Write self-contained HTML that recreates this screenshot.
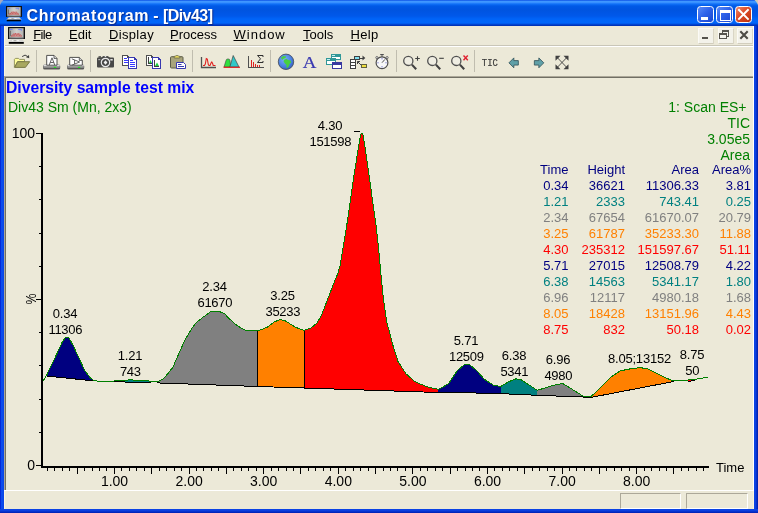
<!DOCTYPE html>
<html><head><meta charset="utf-8">
<style>
html,body{margin:0;padding:0;}
html{background:#ece9d8;}
#w{position:absolute;left:0;top:0;width:758px;height:513px;will-change:transform;}
body{width:758px;height:513px;overflow:hidden;background:#ece9d8;font-family:"Liberation Sans",sans-serif;position:relative;}
.abs{position:absolute;}
#title{left:0;top:0;width:758px;height:26px;clip-path:polygon(0 5px,1px 3px,2px 1.5px,3.5px 0,754.5px 0,756px 1.5px,757px 3px,758px 5px,758px 26px,0 26px);
background:linear-gradient(to bottom,#0a48e0 0px,#2f86fc 1px,#3f97ff 1.5px,#3890ff 2.5px,#1070f8 4px,#0059e6 6px,#0054e0 10px,#0058ea 16px,#0064f8 19px,#0066fa 23px,#0050e0 24px,#0036c0 25px,#0030b0 26px);}
#ttext{left:26.5px;top:5.5px;color:#fff;font-weight:bold;font-size:16px;line-height:20px;white-space:nowrap;text-shadow:1px 1px 1px #0a2a8a;letter-spacing:0.2px;word-spacing:-0.5px}
.bl{left:0;top:26px;width:4px;height:487px;background:linear-gradient(to right,#0019cf 0%,#0d4ff0 40%,#0a44e4 100%);}
.br{left:754px;top:26px;width:4px;height:487px;background:linear-gradient(to right,#0b45e6 0%,#0a3fe0 40%,#001ba8 100%);}
.bb{left:0;top:509px;width:758px;height:4px;background:linear-gradient(to bottom,#0b45e6,#0a3fe0 40%,#001fb0 100%);}
.menu{top:27px;font-size:13px;line-height:16px;color:#000;white-space:nowrap;}
.menu u{text-decoration:underline;}
.sep{width:1px;height:22px;top:50px;background:#c0bdaf;}
.t13{font-size:13px;line-height:16px;white-space:nowrap;}
.t14{font-size:14px;line-height:16px;white-space:nowrap;}
.r{text-align:right;}
.c{text-align:center;}
.cb{top:6px;width:14.500px;height:15px;border:1px solid #fff;border-radius:3.5px;}
.mb{top:27.5px;width:14px;height:14px;background:#f3f2ea;border:1px solid;border-color:#fbfaf6 #d9d5c5 #d2cebd #fbfaf6;border-radius:1px}
</style></head><body><div id="w">
<div class="abs" style="left:0;top:0;width:6px;height:6px;background:#a5a9c0"></div><div class="abs" style="left:752px;top:0;width:6px;height:6px;background:#cfcbb8"></div><div id="title" class="abs"></div>
<div id="ttext" class="abs"><span style="letter-spacing:0.66px">Chromatogram</span><span> - </span><span style="letter-spacing:-0.55px">[Div43]</span></div>
<div class="abs bl"></div><div class="abs br"></div><div class="abs bb"></div>
<!-- menu -->
<div class="abs menu" style="left:33.300px;letter-spacing:-0.650px"><u>F</u>ile</div>
<div class="abs menu" style="left:69px"><u>E</u>dit</div>
<div class="abs menu" style="left:109px;letter-spacing:0.34px"><u>D</u>isplay</div>
<div class="abs menu" style="left:170px"><u>P</u>rocess</div>
<div class="abs menu" style="left:233.5px;letter-spacing:1px"><u>W</u>indow</div>
<div class="abs menu" style="left:303px"><u>T</u>ools</div>
<div class="abs menu" style="left:350.4px;letter-spacing:0.4px"><u>H</u>elp</div>
<!-- toolbar seps -->
<div class="abs sep" style="left:36px"></div>
<div class="abs sep" style="left:90px"></div>
<div class="abs sep" style="left:192px"></div>
<div class="abs sep" style="left:270px"></div>
<div class="abs sep" style="left:396px"></div>
<div class="abs sep" style="left:474px"></div>
<!-- lines -->
<div class="abs" style="left:4px;top:45px;width:750px;height:1px;background:#c9c6b8"></div>
<div class="abs" style="left:4px;top:46px;width:750px;height:1px;background:#fff"></div>
<div class="abs" style="left:4px;top:26px;width:1px;height:50px;background:#fbf5df"></div>
<div class="abs" style="left:753px;top:26px;width:1px;height:50px;background:#fff"></div>
<div class="abs" style="left:4px;top:76px;width:750px;height:1px;background:#aca899"></div>
<div class="abs" style="left:5px;top:77px;width:748px;height:1px;background:#716f64"></div>
<div class="abs" style="left:4px;top:76px;width:1px;height:414px;background:#aca899"></div>
<div class="abs" style="left:5px;top:77px;width:1px;height:413px;background:#716f64"></div>
<div class="abs" style="left:4px;top:490px;width:750px;height:1px;background:#fff"></div><div class="abs" style="left:753px;top:76px;width:1px;height:415px;background:#fff"></div>
<div class="abs" style="left:4px;top:491px;width:1px;height:18px;background:#fbf5df"></div>
<div class="abs" style="left:753px;top:491px;width:1px;height:18px;background:#fbf5df"></div>
<!-- status panels -->
<div class="abs" style="left:620px;top:493px;width:61px;height:16px;border:1px solid #aca899;border-right-color:#fff;border-bottom-color:#fff;box-sizing:border-box"></div>
<div class="abs" style="left:686px;top:493px;width:62px;height:16px;border:1px solid #aca899;border-right-color:#fff;border-bottom-color:#fff;box-sizing:border-box"></div>
<!-- chart text -->
<div class="abs" style="left:6px;top:78.600px;font-size:15.700px;line-height:18px;font-weight:bold;color:#0000ff;white-space:nowrap">Diversity sample test mix</div>
<div class="abs t14" style="left:8px;top:99px;color:#008000">Div43 Sm (Mn, 2x3)</div>
<svg class="abs" style="left:0;top:0" width="758" height="513" viewBox="0 0 758 513" id="chart">
<g shape-rendering="crispEdges">
<polygon points="46.6,375.3 54.7,358.4 62.2,342.2 65.3,337.4 67.0,337.0 68.7,337.4 73.4,346.0 79.7,359.7 84.7,370.3 89.7,377.2 92.8,379.9 92.8,380.3 46.6,375.5" fill="#000080" stroke="none"/>
<polygon points="109.9,381.3 116.0,380.9 122.7,380.7 127.0,380.2 130.4,379.4 133.5,380.1 137.0,380.6 148.5,380.8 151.4,381.5 151.4,381.7 109.9,381.4" fill="#008080" stroke="none"/>
<polygon points="156.7,381.7 160.0,380.6 164.0,378.3 172.8,367.5 178.1,355.3 185.1,339.5 192.1,328.1 196.0,322.8 202.6,317.5 210.5,311.9 220.2,311.9 224.6,313.7 228.9,318.4 236.0,324.6 241.2,328.1 245.6,330.2 253.0,330.7 257.6,331.0 257.6,386.0 156.7,382.4" fill="#808080" stroke="none"/>
<polygon points="257.6,331.0 267.0,327.4 274.0,322.0 280.5,319.5 285.6,321.0 295.0,327.0 304.0,330.5 304.0,387.5 257.6,386.0" fill="#ff8000" stroke="none"/>
<polygon points="304.0,330.5 311.0,328.0 316.9,323.2 321.6,315.0 327.4,299.8 333.3,284.6 338.0,273.0 340.3,264.8 343.3,246.0 346.8,225.0 350.5,200.0 354.3,173.5 358.0,150.0 360.5,135.0 361.8,133.0 363.0,135.0 365.5,150.0 368.8,173.5 372.5,200.0 376.0,225.0 378.4,246.0 380.7,271.8 383.5,299.8 387.0,323.2 389.0,330.0 392.4,343.5 398.0,361.4 405.9,373.7 414.9,381.6 426.0,386.5 438.4,389.4 438.4,392.0 304.0,387.5" fill="#ff0000" stroke="none"/>
<polygon points="438.4,389.4 448.5,383.8 457.5,370.4 464.2,364.8 469.8,364.8 476.5,370.4 484.4,379.3 493.3,385.0 500.7,386.5 500.7,393.1 438.4,391.6" fill="#000080" stroke="none"/>
<polygon points="500.7,386.5 509.0,381.6 515.8,378.9 520.3,379.3 529.2,385.0 537.3,390.3 537.3,394.8 500.7,393.1" fill="#008080" stroke="none"/>
<polygon points="537.3,390.3 551.4,385.9 562.4,383.4 570.2,388.0 582.8,396.0 590.6,397.0 590.6,396.8 537.3,394.8" fill="#808080" stroke="none"/>
<polygon points="590.6,397.0 601.6,386.5 611.0,377.0 620.5,370.8 633.0,368.3 640.9,367.7 648.7,369.2 658.0,374.0 667.6,378.7 673.8,380.9 673.8,381.0 590.6,397.0" fill="#ff8000" stroke="none"/>
<polygon points="691.0,379.4 695.0,379.4 695.5,380.0 687.5,380.9" fill="#ff0000" stroke="none"/>
<line x1="46.6" y1="376.0" x2="92.8" y2="380.8" stroke="#000" stroke-width="1"/>
<line x1="109.9" y1="381.9" x2="151.4" y2="382.2" stroke="#000" stroke-width="1"/>
<line x1="156.7" y1="382.9" x2="257.6" y2="386.5" stroke="#000" stroke-width="1"/>
<line x1="257.6" y1="386.5" x2="304.0" y2="388.0" stroke="#000" stroke-width="1"/>
<line x1="304.0" y1="388.0" x2="438.4" y2="392.5" stroke="#000" stroke-width="1"/>
<line x1="438.4" y1="392.1" x2="500.7" y2="393.6" stroke="#000" stroke-width="1"/>
<line x1="500.7" y1="393.6" x2="537.3" y2="395.3" stroke="#000" stroke-width="1"/>
<line x1="537.3" y1="395.3" x2="590.6" y2="397.3" stroke="#000" stroke-width="1"/>
<line x1="590.6" y1="397.5" x2="673.8" y2="381.5" stroke="#000" stroke-width="1"/>
<line x1="687.5" y1="381.4" x2="695.5" y2="380.5" stroke="#000" stroke-width="1"/>
<line x1="257.6" y1="331.0" x2="257.6" y2="386.0" stroke="#000" stroke-width="1"/>
<line x1="304.0" y1="330.5" x2="304.0" y2="387.5" stroke="#000" stroke-width="1"/>
<polyline points="43.2,380.7 46.6,375.3 54.7,358.4 62.2,342.2 65.3,337.4 67.0,337.0 68.7,337.4 73.4,346.0 79.7,359.7 84.7,370.3 89.7,377.2 92.8,379.9 94.7,380.7 104.0,381.9 109.9,381.3 116.0,380.9 122.7,380.7 127.0,380.2 130.4,379.4 133.5,380.1 137.0,380.6 148.5,380.8 151.4,381.5 156.7,381.7 160.0,380.6 164.0,378.3 172.8,367.5 178.1,355.3 185.1,339.5 192.1,328.1 196.0,322.8 202.6,317.5 210.5,311.9 220.2,311.9 224.6,313.7 228.9,318.4 236.0,324.6 241.2,328.1 245.6,330.2 253.0,330.7 257.6,331.0 267.0,327.4 274.0,322.0 280.5,319.5 285.6,321.0 295.0,327.0 304.0,330.5 311.0,328.0 316.9,323.2 321.6,315.0 327.4,299.8 333.3,284.6 338.0,273.0 340.3,264.8 343.3,246.0 346.8,225.0 350.5,200.0 354.3,173.5 358.0,150.0 360.5,135.0 361.8,133.0 363.0,135.0 365.5,150.0 368.8,173.5 372.5,200.0 376.0,225.0 378.4,246.0 380.7,271.8 383.5,299.8 387.0,323.2 389.0,330.0 392.4,343.5 398.0,361.4 405.9,373.7 414.9,381.6 426.0,386.5 438.4,389.4 448.5,383.8 457.5,370.4 464.2,364.8 469.8,364.8 476.5,370.4 484.4,379.3 493.3,385.0 500.7,386.5 509.0,381.6 515.8,378.9 520.3,379.3 529.2,385.0 537.3,390.3 551.4,385.9 562.4,383.4 570.2,388.0 582.8,396.0 590.6,397.0 601.6,386.5 611.0,377.0 620.5,370.8 633.0,368.3 640.9,367.7 648.7,369.2 658.0,374.0 667.6,378.7 673.8,380.9 683.0,380.9 687.0,380.3 691.0,379.4 695.0,379.4 699.0,378.7 707.8,377.0" fill="none" stroke="#008000" stroke-width="1"/>
<rect x="41" y="133" width="2" height="335" fill="#000"/>
<rect x="41" y="466" width="668" height="2" fill="#000"/>
<rect x="36" y="133" width="5" height="1" fill="#000"/>
<rect x="39" y="166" width="2" height="1" fill="#000"/>
<rect x="39" y="199" width="2" height="1" fill="#000"/>
<rect x="39" y="233" width="2" height="1" fill="#000"/>
<rect x="39" y="266" width="2" height="1" fill="#000"/>
<rect x="36" y="299" width="5" height="1" fill="#000"/>
<rect x="39" y="332" width="2" height="1" fill="#000"/>
<rect x="39" y="365" width="2" height="1" fill="#000"/>
<rect x="39" y="399" width="2" height="1" fill="#000"/>
<rect x="39" y="432" width="2" height="1" fill="#000"/>
<rect x="36" y="465" width="5" height="1" fill="#000"/>
<rect x="47" y="468" width="1" height="3" fill="#000"/>
<rect x="54" y="468" width="1" height="3" fill="#000"/>
<rect x="62" y="468" width="1" height="3" fill="#000"/>
<rect x="69" y="468" width="1" height="3" fill="#000"/>
<rect x="77" y="468" width="1" height="6" fill="#000"/>
<rect x="84" y="468" width="1" height="3" fill="#000"/>
<rect x="92" y="468" width="1" height="3" fill="#000"/>
<rect x="99" y="468" width="1" height="3" fill="#000"/>
<rect x="106" y="468" width="1" height="3" fill="#000"/>
<rect x="114" y="468" width="1" height="6" fill="#000"/>
<rect x="121" y="468" width="1" height="3" fill="#000"/>
<rect x="129" y="468" width="1" height="3" fill="#000"/>
<rect x="136" y="468" width="1" height="3" fill="#000"/>
<rect x="144" y="468" width="1" height="3" fill="#000"/>
<rect x="151" y="468" width="1" height="6" fill="#000"/>
<rect x="159" y="468" width="1" height="3" fill="#000"/>
<rect x="166" y="468" width="1" height="3" fill="#000"/>
<rect x="174" y="468" width="1" height="3" fill="#000"/>
<rect x="181" y="468" width="1" height="3" fill="#000"/>
<rect x="189" y="468" width="1" height="6" fill="#000"/>
<rect x="196" y="468" width="1" height="3" fill="#000"/>
<rect x="203" y="468" width="1" height="3" fill="#000"/>
<rect x="211" y="468" width="1" height="3" fill="#000"/>
<rect x="218" y="468" width="1" height="3" fill="#000"/>
<rect x="226" y="468" width="1" height="6" fill="#000"/>
<rect x="233" y="468" width="1" height="3" fill="#000"/>
<rect x="241" y="468" width="1" height="3" fill="#000"/>
<rect x="248" y="468" width="1" height="3" fill="#000"/>
<rect x="256" y="468" width="1" height="3" fill="#000"/>
<rect x="263" y="468" width="1" height="6" fill="#000"/>
<rect x="271" y="468" width="1" height="3" fill="#000"/>
<rect x="278" y="468" width="1" height="3" fill="#000"/>
<rect x="286" y="468" width="1" height="3" fill="#000"/>
<rect x="293" y="468" width="1" height="3" fill="#000"/>
<rect x="300" y="468" width="1" height="6" fill="#000"/>
<rect x="308" y="468" width="1" height="3" fill="#000"/>
<rect x="315" y="468" width="1" height="3" fill="#000"/>
<rect x="323" y="468" width="1" height="3" fill="#000"/>
<rect x="330" y="468" width="1" height="3" fill="#000"/>
<rect x="338" y="468" width="1" height="6" fill="#000"/>
<rect x="345" y="468" width="1" height="3" fill="#000"/>
<rect x="353" y="468" width="1" height="3" fill="#000"/>
<rect x="360" y="468" width="1" height="3" fill="#000"/>
<rect x="368" y="468" width="1" height="3" fill="#000"/>
<rect x="375" y="468" width="1" height="6" fill="#000"/>
<rect x="383" y="468" width="1" height="3" fill="#000"/>
<rect x="390" y="468" width="1" height="3" fill="#000"/>
<rect x="397" y="468" width="1" height="3" fill="#000"/>
<rect x="405" y="468" width="1" height="3" fill="#000"/>
<rect x="412" y="468" width="1" height="6" fill="#000"/>
<rect x="420" y="468" width="1" height="3" fill="#000"/>
<rect x="427" y="468" width="1" height="3" fill="#000"/>
<rect x="435" y="468" width="1" height="3" fill="#000"/>
<rect x="442" y="468" width="1" height="3" fill="#000"/>
<rect x="450" y="468" width="1" height="6" fill="#000"/>
<rect x="457" y="468" width="1" height="3" fill="#000"/>
<rect x="465" y="468" width="1" height="3" fill="#000"/>
<rect x="472" y="468" width="1" height="3" fill="#000"/>
<rect x="479" y="468" width="1" height="3" fill="#000"/>
<rect x="487" y="468" width="1" height="6" fill="#000"/>
<rect x="494" y="468" width="1" height="3" fill="#000"/>
<rect x="502" y="468" width="1" height="3" fill="#000"/>
<rect x="509" y="468" width="1" height="3" fill="#000"/>
<rect x="517" y="468" width="1" height="3" fill="#000"/>
<rect x="524" y="468" width="1" height="6" fill="#000"/>
<rect x="532" y="468" width="1" height="3" fill="#000"/>
<rect x="539" y="468" width="1" height="3" fill="#000"/>
<rect x="547" y="468" width="1" height="3" fill="#000"/>
<rect x="554" y="468" width="1" height="3" fill="#000"/>
<rect x="562" y="468" width="1" height="6" fill="#000"/>
<rect x="569" y="468" width="1" height="3" fill="#000"/>
<rect x="576" y="468" width="1" height="3" fill="#000"/>
<rect x="584" y="468" width="1" height="3" fill="#000"/>
<rect x="591" y="468" width="1" height="3" fill="#000"/>
<rect x="599" y="468" width="1" height="6" fill="#000"/>
<rect x="606" y="468" width="1" height="3" fill="#000"/>
<rect x="614" y="468" width="1" height="3" fill="#000"/>
<rect x="621" y="468" width="1" height="3" fill="#000"/>
<rect x="629" y="468" width="1" height="3" fill="#000"/>
<rect x="636" y="468" width="1" height="6" fill="#000"/>
<rect x="644" y="468" width="1" height="3" fill="#000"/>
<rect x="651" y="468" width="1" height="3" fill="#000"/>
<rect x="659" y="468" width="1" height="3" fill="#000"/>
<rect x="666" y="468" width="1" height="3" fill="#000"/>
<rect x="673" y="468" width="1" height="6" fill="#000"/>
<rect x="681" y="468" width="1" height="3" fill="#000"/>
<rect x="688" y="468" width="1" height="3" fill="#000"/>
<rect x="696" y="468" width="1" height="3" fill="#000"/>
<rect x="703" y="468" width="1" height="3" fill="#000"/>
<rect x="354" y="131" width="6" height="1" fill="#000"/>
</g>
</svg>
<div class="abs t13" style="left:25.0px;width:80px;text-align:center;top:306.0px;color:#000;letter-spacing:-0.25px;">0.34</div>
<div class="abs t13" style="left:25.3px;width:80px;text-align:center;top:322.0px;color:#000;letter-spacing:-0.3px;">11306</div>
<div class="abs t13" style="left:90.0px;width:80px;text-align:center;top:347.5px;color:#000;letter-spacing:-0.25px;">1.21</div>
<div class="abs t13" style="left:90.3px;width:80px;text-align:center;top:363.5px;color:#000;letter-spacing:-0.3px;">743</div>
<div class="abs t13" style="left:174.5px;width:80px;text-align:center;top:279.0px;color:#000;letter-spacing:-0.25px;">2.34</div>
<div class="abs t13" style="left:174.8px;width:80px;text-align:center;top:295.0px;color:#000;letter-spacing:-0.3px;">61670</div>
<div class="abs t13" style="left:242.5px;width:80px;text-align:center;top:287.5px;color:#000;letter-spacing:-0.25px;">3.25</div>
<div class="abs t13" style="left:242.8px;width:80px;text-align:center;top:303.5px;color:#000;letter-spacing:-0.3px;">35233</div>
<div class="abs t13" style="left:290.0px;width:80px;text-align:center;top:118.0px;color:#000;letter-spacing:-0.25px;">4.30</div>
<div class="abs t13" style="left:290.3px;width:80px;text-align:center;top:134.0px;color:#000;letter-spacing:-0.3px;">151598</div>
<div class="abs t13" style="left:426.0px;width:80px;text-align:center;top:333.0px;color:#000;letter-spacing:-0.25px;">5.71</div>
<div class="abs t13" style="left:426.3px;width:80px;text-align:center;top:349.0px;color:#000;letter-spacing:-0.3px;">12509</div>
<div class="abs t13" style="left:474.0px;width:80px;text-align:center;top:347.5px;color:#000;letter-spacing:-0.25px;">6.38</div>
<div class="abs t13" style="left:474.3px;width:80px;text-align:center;top:363.5px;color:#000;letter-spacing:-0.3px;">5341</div>
<div class="abs t13" style="left:518.0px;width:80px;text-align:center;top:352.0px;color:#000;letter-spacing:-0.25px;">6.96</div>
<div class="abs t13" style="left:518.3px;width:80px;text-align:center;top:368.0px;color:#000;letter-spacing:-0.3px;">4980</div>
<div class="abs t13" style="left:652.0px;width:80px;text-align:center;top:347.0px;color:#000;letter-spacing:-0.25px;">8.75</div>
<div class="abs t13" style="left:652.3px;width:80px;text-align:center;top:363.0px;color:#000;letter-spacing:-0.3px;">50</div>
<div class="abs t13" style="left:589.5px;width:100px;text-align:center;top:351.2px;color:#000;letter-spacing:-0.2px;">8.05;13152</div>
<div class="abs t14" style="left:74.5px;width:80px;text-align:center;top:473.3px;color:#000;">1.00</div>
<div class="abs t14" style="left:149.1px;width:80px;text-align:center;top:473.3px;color:#000;">2.00</div>
<div class="abs t14" style="left:223.7px;width:80px;text-align:center;top:473.3px;color:#000;">3.00</div>
<div class="abs t14" style="left:298.3px;width:80px;text-align:center;top:473.3px;color:#000;">4.00</div>
<div class="abs t14" style="left:372.9px;width:80px;text-align:center;top:473.3px;color:#000;">5.00</div>
<div class="abs t14" style="left:447.5px;width:80px;text-align:center;top:473.3px;color:#000;">6.00</div>
<div class="abs t14" style="left:522.1px;width:80px;text-align:center;top:473.3px;color:#000;">7.00</div>
<div class="abs t14" style="left:596.7px;width:80px;text-align:center;top:473.3px;color:#000;">8.00</div>
<div class="abs t14" style="left:-45.0px;width:80px;text-align:right;top:125.0px;color:#000;">100</div>
<div class="abs t14" style="left:-45.0px;width:80px;text-align:right;top:457.0px;color:#000;">0</div>
<div class="abs t13" style="left:716.0px;top:460.0px;color:#000;">Time</div>
<div class="abs t13" style="left:25.300px;top:291px;width:12px;text-align:center;transform:rotate(-90deg) scale(0.95,1.18);transform-origin:center;">%</div>
<div class="abs t14" style="left:626.5px;width:120px;text-align:right;top:99.0px;color:#008000;">1: Scan ES+</div>
<div class="abs t14" style="left:630.0px;width:120px;text-align:right;top:115.0px;color:#008000;">TIC</div>
<div class="abs t14" style="left:630.0px;width:120px;text-align:right;top:131.0px;color:#008000;">3.05e5</div>
<div class="abs t14" style="left:630.0px;width:120px;text-align:right;top:147.0px;color:#008000;">Area</div>
<div class="abs t13" style="left:488.5px;width:80px;text-align:right;top:161.6px;color:#000080;">Time</div>
<div class="abs t13" style="left:545.0px;width:80px;text-align:right;top:161.6px;color:#000080;">Height</div>
<div class="abs t13" style="left:619.0px;width:80px;text-align:right;top:161.6px;color:#000080;">Area</div>
<div class="abs t13" style="left:671.0px;width:80px;text-align:right;top:161.6px;color:#000080;">Area%</div>
<div class="abs t13" style="left:488.5px;width:80px;text-align:right;top:177.6px;color:#000080;">0.34</div>
<div class="abs t13" style="left:545.0px;width:80px;text-align:right;top:177.6px;color:#000080;">36621</div>
<div class="abs t13" style="left:619.0px;width:80px;text-align:right;top:177.6px;color:#000080;">11306.33</div>
<div class="abs t13" style="left:671.0px;width:80px;text-align:right;top:177.6px;color:#000080;">3.81</div>
<div class="abs t13" style="left:488.5px;width:80px;text-align:right;top:193.6px;color:#008080;">1.21</div>
<div class="abs t13" style="left:545.0px;width:80px;text-align:right;top:193.6px;color:#008080;">2333</div>
<div class="abs t13" style="left:619.0px;width:80px;text-align:right;top:193.6px;color:#008080;">743.41</div>
<div class="abs t13" style="left:671.0px;width:80px;text-align:right;top:193.6px;color:#008080;">0.25</div>
<div class="abs t13" style="left:488.5px;width:80px;text-align:right;top:209.6px;color:#808080;">2.34</div>
<div class="abs t13" style="left:545.0px;width:80px;text-align:right;top:209.6px;color:#808080;">67654</div>
<div class="abs t13" style="left:619.0px;width:80px;text-align:right;top:209.6px;color:#808080;">61670.07</div>
<div class="abs t13" style="left:671.0px;width:80px;text-align:right;top:209.6px;color:#808080;">20.79</div>
<div class="abs t13" style="left:488.5px;width:80px;text-align:right;top:225.6px;color:#ff8000;">3.25</div>
<div class="abs t13" style="left:545.0px;width:80px;text-align:right;top:225.6px;color:#ff8000;">61787</div>
<div class="abs t13" style="left:619.0px;width:80px;text-align:right;top:225.6px;color:#ff8000;">35233.30</div>
<div class="abs t13" style="left:671.0px;width:80px;text-align:right;top:225.6px;color:#ff8000;">11.88</div>
<div class="abs t13" style="left:488.5px;width:80px;text-align:right;top:241.6px;color:#ff0000;">4.30</div>
<div class="abs t13" style="left:545.0px;width:80px;text-align:right;top:241.6px;color:#ff0000;">235312</div>
<div class="abs t13" style="left:619.0px;width:80px;text-align:right;top:241.6px;color:#ff0000;">151597.67</div>
<div class="abs t13" style="left:671.0px;width:80px;text-align:right;top:241.6px;color:#ff0000;">51.11</div>
<div class="abs t13" style="left:488.5px;width:80px;text-align:right;top:257.6px;color:#000080;">5.71</div>
<div class="abs t13" style="left:545.0px;width:80px;text-align:right;top:257.6px;color:#000080;">27015</div>
<div class="abs t13" style="left:619.0px;width:80px;text-align:right;top:257.6px;color:#000080;">12508.79</div>
<div class="abs t13" style="left:671.0px;width:80px;text-align:right;top:257.6px;color:#000080;">4.22</div>
<div class="abs t13" style="left:488.5px;width:80px;text-align:right;top:273.6px;color:#008080;">6.38</div>
<div class="abs t13" style="left:545.0px;width:80px;text-align:right;top:273.6px;color:#008080;">14563</div>
<div class="abs t13" style="left:619.0px;width:80px;text-align:right;top:273.6px;color:#008080;">5341.17</div>
<div class="abs t13" style="left:671.0px;width:80px;text-align:right;top:273.6px;color:#008080;">1.80</div>
<div class="abs t13" style="left:488.5px;width:80px;text-align:right;top:289.6px;color:#808080;">6.96</div>
<div class="abs t13" style="left:545.0px;width:80px;text-align:right;top:289.6px;color:#808080;">12117</div>
<div class="abs t13" style="left:619.0px;width:80px;text-align:right;top:289.6px;color:#808080;">4980.18</div>
<div class="abs t13" style="left:671.0px;width:80px;text-align:right;top:289.6px;color:#808080;">1.68</div>
<div class="abs t13" style="left:488.5px;width:80px;text-align:right;top:305.6px;color:#ff8000;">8.05</div>
<div class="abs t13" style="left:545.0px;width:80px;text-align:right;top:305.6px;color:#ff8000;">18428</div>
<div class="abs t13" style="left:619.0px;width:80px;text-align:right;top:305.6px;color:#ff8000;">13151.96</div>
<div class="abs t13" style="left:671.0px;width:80px;text-align:right;top:305.6px;color:#ff8000;">4.43</div>
<div class="abs t13" style="left:488.5px;width:80px;text-align:right;top:321.6px;color:#ff0000;">8.75</div>
<div class="abs t13" style="left:545.0px;width:80px;text-align:right;top:321.6px;color:#ff0000;">832</div>
<div class="abs t13" style="left:619.0px;width:80px;text-align:right;top:321.6px;color:#ff0000;">50.18</div>
<div class="abs t13" style="left:671.0px;width:80px;text-align:right;top:321.6px;color:#ff0000;">0.02</div>
<!-- app icons -->
<svg class="abs" style="left:6px;top:6px" width="16" height="15.5" viewBox="0 0 17 17" preserveAspectRatio="none">
<defs><linearGradient id="scra" x1="0" x2="1" y1="0" y2="0"><stop offset="0" stop-color="#a4a4a0"/><stop offset="0.5" stop-color="#d0d0cc"/><stop offset="1" stop-color="#b4b4b0"/></linearGradient></defs>
<rect x="0" y="0" width="17" height="12" fill="#101010"/>
<rect x="1.200" y="1.200" width="14.400" height="9.800" fill="url(#scra)"/>
<rect x="2" y="2" width="2.600" height="0.900" fill="#7080f8"/><rect x="10.200" y="2" width="3.600" height="0.900" fill="#7080f8"/><rect x="12.800" y="2.800" width="1" height="0.900" fill="#7080f8"/>
<rect x="2.400" y="3.800" width="0.600" height="5.400" fill="#484848"/>
<path d="M3 8.800 H3.800 L4.500 7.600 L5.200 8.800 L6 6.400 L6.800 8.800 L7.600 6 L8.400 8.800 L9.200 6.400 L10 8.800 L10.800 6.200 L11.600 8.800 L12.300 7.400 L13 8.800 H13.800" stroke="#c83838" fill="none" stroke-width="0.550"/>
<path d="M3 9.300 H13.800" stroke="#d05050" stroke-width="0.600"/>
<rect x="1.200" y="10.600" width="14.400" height="1.400" fill="#585858"/>
<polygon points="3,12.300 14.200,12.300 16.700,15 0.300,15" fill="#d6d6d2"/>
<rect x="4" y="13.300" width="1" height="0.800" fill="#fff"/><rect x="9" y="13.300" width="2.200" height="0.800" fill="#fff"/><rect x="6" y="13.500" width="2" height="0.600" fill="#909090"/>
<rect x="0.800" y="15" width="15" height="1.800" fill="#000"/>
</svg>
<svg class="abs" style="left:8px;top:27px" width="17" height="17" viewBox="0 0 17 17">
<defs><linearGradient id="scrb" x1="0" x2="1" y1="0" y2="0"><stop offset="0" stop-color="#a4a4a0"/><stop offset="0.5" stop-color="#d0d0cc"/><stop offset="1" stop-color="#b4b4b0"/></linearGradient></defs>
<rect x="0" y="0" width="17" height="12" fill="#101010"/>
<rect x="1.200" y="1.200" width="14.400" height="9.800" fill="url(#scrb)"/>
<rect x="2" y="2" width="2.600" height="0.900" fill="#7080f8"/><rect x="10.200" y="2" width="3.600" height="0.900" fill="#7080f8"/><rect x="12.800" y="2.800" width="1" height="0.900" fill="#7080f8"/>
<rect x="2.400" y="3.800" width="0.600" height="5.400" fill="#484848"/>
<path d="M3 8.800 H3.800 L4.500 7.600 L5.200 8.800 L6 6.400 L6.800 8.800 L7.600 6 L8.400 8.800 L9.200 6.400 L10 8.800 L10.800 6.200 L11.600 8.800 L12.300 7.400 L13 8.800 H13.800" stroke="#c83838" fill="none" stroke-width="0.550"/>
<path d="M3 9.300 H13.800" stroke="#d05050" stroke-width="0.600"/>
<rect x="1.200" y="10.600" width="14.400" height="1.400" fill="#585858"/>
<polygon points="3,12.300 14.200,12.300 16.700,15 0.300,15" fill="#d6d6d2"/>
<rect x="4" y="13.300" width="1" height="0.800" fill="#fff"/><rect x="9" y="13.300" width="2.200" height="0.800" fill="#fff"/><rect x="6" y="13.500" width="2" height="0.600" fill="#909090"/>
<rect x="0.800" y="15" width="15" height="1.800" fill="#000"/>
</svg>
<!-- caption buttons -->
<div class="abs cb" style="left:697px;background:linear-gradient(135deg,#5b8cf8 0%,#2f63ea 45%,#1a45cf 100%)"><div class="abs" style="left:2.500px;top:10px;width:7px;height:3px;background:#fff"></div></div>
<div class="abs cb" style="left:716px;background:linear-gradient(135deg,#5b8cf8 0%,#2f63ea 45%,#1a45cf 100%)"><div class="abs" style="left:2.500px;top:2.500px;width:9px;height:7px;border:1px solid #fff;border-top-width:3px;box-sizing:content-box"></div></div>
<div class="abs cb" style="left:735px;background:linear-gradient(135deg,#f08a6c 0%,#dd4a26 45%,#b8300e 100%)"><svg class="abs" style="left:0;top:0" width="15" height="15" viewBox="0 0 15 15"><path d="M2.300 2.300 L12.600 12.600 M12.600 2.300 L2.300 12.600" stroke="#fff" stroke-width="2" stroke-linecap="butt"/></svg></div>
<!-- mdi buttons -->
<div class="abs mb" style="left:698px"><div class="abs" style="left:3px;top:8px;width:6px;height:2px;background:#55534c"></div></div>
<div class="abs mb" style="left:717.500px"><svg class="abs" style="left:-1.300px;top:-1px" width="14" height="14" viewBox="0 0 14 14" shape-rendering="crispEdges"><path d="M5.500 3 H11.500 V8.500 H9.500 M5.500 3 V5" stroke="#55534c" fill="none" stroke-width="1"/><rect x="5" y="2" width="7" height="2" fill="#55534c"/><rect x="2.500" y="5.500" width="7" height="5" stroke="#55534c" fill="none"/><rect x="2" y="5" width="8" height="2" fill="#55534c"/></svg></div>
<div class="abs mb" style="left:736.500px"><svg class="abs" style="left:-0.700px;top:-1px" width="14" height="14" viewBox="0 0 14 14"><path d="M3.300 3.300 L10.700 10.700 M10.700 3.300 L3.300 10.700" stroke="#4e4c46" stroke-width="2.100"/></svg></div>
<!-- toolbar icons -->
<!-- open -->
<svg class="abs" style="left:13px;top:53px" width="18" height="16" viewBox="0 0 18 16">
<path d="M1.400 14.300 V6.300 L2.300 5.400 H5.500 L6.500 6.400 H11.500 V8.700 H4.600 Z" fill="#ffff9c" stroke="#8c8c58" stroke-width="0.9"/>
<path d="M1.700 14.400 L4.600 8.700 H16.700 L12.400 14.400 Z" fill="#a8a860" stroke="#707040" stroke-width="0.9"/>
<path d="M9.100 3.600 Q12.200 0.600 14.800 3.600" fill="none" stroke="#404040" stroke-width="1"/><path d="M13 4.300 L16.200 5.300 L16 2 Z" fill="#404040"/>
</svg>
<!-- print A -->
<svg class="abs" style="left:42px;top:54px" width="19" height="17" viewBox="0 0 19 17">
<rect x="1.100" y="10.400" width="17.100" height="5.200" rx="1.500" fill="#585858"/>
<rect x="1.500" y="10.600" width="16.300" height="2" rx="0.800" fill="#dedede"/>
<rect x="1.500" y="12.300" width="16.300" height="1.400" fill="#a0a0a0"/>
<path d="M4.700 11.200 V1.400 H12 L15 4.400 V11.200 Z" fill="#fff" stroke="#404040" stroke-width="0.9"/><path d="M12 1.400 V4.400 H15" fill="#e0e0e0" stroke="#404040" stroke-width="0.8"/>
<path d="M7.200 11.200 L10 3.800 L12.800 11.200 M8.300 8.500 H11.700" fill="none" stroke="#505050" stroke-width="0.9"/>
<rect x="11.800" y="12.800" width="2.400" height="1.200" fill="#20e020"/>
</svg>
<!-- print landscape -->
<svg class="abs" style="left:66px;top:54px" width="19" height="17" viewBox="0 0 19 17">
<rect x="1.100" y="10.400" width="17.100" height="5.200" rx="1.500" fill="#585858"/>
<rect x="1.500" y="10.600" width="16.300" height="2" rx="0.800" fill="#dedede"/>
<rect x="1.500" y="12.300" width="16.300" height="1.400" fill="#a0a0a0"/>
<path d="M3.700 11.200 V3.400 H13.300 L16.300 6.400 V11.200 Z" fill="#fff" stroke="#404040" stroke-width="0.9"/><path d="M13.300 3.400 V6.400 H16.300" fill="#e0e0e0" stroke="#404040" stroke-width="0.8"/>
<path d="M5.800 4.800 L13.600 8 L5.800 11.200 M8.600 6 V10" fill="none" stroke="#505050" stroke-width="0.9"/>
<rect x="11.900" y="12.800" width="2.400" height="1.200" fill="#20e020"/>
</svg>
<!-- camera -->
<svg class="abs" style="left:96px;top:54px" width="19" height="15" viewBox="0 0 19 15">
<path d="M1 4.5 Q1 3.5 2 3.5 H5 L7.5 2 H11.5 L14 3.5 H17 Q18 3.5 18 4.5 V12.5 Q18 13.5 17 13.5 H2 Q1 13.5 1 12.5 Z" fill="#484848"/>
<rect x="2.5" y="2.2" width="2.5" height="1.6" fill="#484848"/>
<circle cx="9.5" cy="8.5" r="4.2" fill="#484848" stroke="#e8e8e8" stroke-width="1.2"/><path d="M9.500 6.300 L11.400 8.500 L9.500 10.700 L7.600 8.500 Z" fill="#f0f0f0"/>
<rect x="14.3" y="5" width="2.4" height="1.6" fill="#e0e0e0"/><rect x="2.3" y="5" width="2" height="1.2" fill="#b0b0b0"/>
<path d="M9.5 1.2 L10.6 3 H8.4 Z" fill="#e0e0e0"/>
</svg>
<!-- copy -->
<svg class="abs" style="left:121px;top:54px" width="17" height="16" viewBox="0 0 17 16" shape-rendering="crispEdges">
<path d="M1.500 1.500 H6.500 L8.500 3.500 V11.500 H1.500 Z" fill="#fff" stroke="#505050"/><path d="M6.500 1.500 V3.500 H8.500" fill="none" stroke="#505050"/>
<path d="M3 4.500 H6 M3 6.500 H7 M3 8.500 H7" stroke="#3838ff" stroke-width="1"/>
<path d="M7.500 3.500 H13.500 L15.500 5.500 V14.500 H7.500 Z" fill="#fff" stroke="#3838b0"/><path d="M13.500 3.500 V5.500 H15.500" fill="none" stroke="#3838b0"/>
<path d="M9 6.500 H12 M9 8.500 H14 M9 10.500 H14 M9 12.500 H14" stroke="#3838ff" stroke-width="1"/>
</svg>
<!-- copy picture -->
<svg class="abs" style="left:145px;top:54px" width="17" height="16" viewBox="0 0 17 16" shape-rendering="crispEdges">
<path d="M1.500 1.500 H6.500 L8.500 3.500 V11.500 H1.500 Z" fill="#fff" stroke="#505050"/><path d="M6.500 1.500 V3.500 H8.500" fill="none" stroke="#505050"/>
<path d="M3.500 3 V9.500 H7" fill="none" stroke="#404040"/><path d="M4 9 L5.500 6 L7 9 Z" fill="#20d040" stroke="none" shape-rendering="auto"/>
<path d="M7.500 3.500 H13.500 L15.500 5.500 V14.500 H7.500 Z" fill="#fff" stroke="#3838b0"/><path d="M13.500 3.500 V5.500 H15.500" fill="none" stroke="#3838b0"/>
<path d="M9.500 5.500 V12.500 H14" fill="none" stroke="#404040"/><path d="M10 12 L12 8.500 L14 12 Z" fill="#20d040" stroke="none" shape-rendering="auto"/>
</svg>
<!-- paste -->
<svg class="abs" style="left:169px;top:54px" width="18" height="16" viewBox="0 0 18 16">
<rect x="1.500" y="2.700" width="12.500" height="11.300" rx="1" fill="#a8a47c" stroke="#5c5c48"/>
<path d="M5.200 4 V3 Q5.200 2 6.200 2 H7 Q8 0.400 9 2 H9.800 Q10.800 2 10.800 3 V4 Z" fill="#f0e060" stroke="#686848" stroke-width="0.8"/>
<path d="M7.500 8.500 H14.500 L16.500 10.500 V14.500 H7.500 Z" fill="#fff" stroke="#3838b0"/>
<path d="M9 10.500 H12.500 M9 12.500 H15" stroke="#3838b0" stroke-width="1"/>
</svg>
<!-- chromatogram -->
<svg class="abs" style="left:200px;top:55px" width="17" height="15" viewBox="0 0 17 15">
<path d="M1.5 2 V12.5 H16" fill="none" stroke="#505050" stroke-width="1.3"/>
<path d="M3 10.5 H4.5 L5.3 9 L6.3 3.5 L7.3 4 L8.3 9.5 L9 10.5 H10 L11 8 L11.8 7 L12.6 8.5 L13.2 10.5 H15.5" fill="none" stroke="#e02020" stroke-width="1.1"/>
</svg>
<!-- peaks -->
<svg class="abs" style="left:223px;top:54px" width="18" height="15" viewBox="0 0 18 15">
<path d="M1 13 L3 6.5 Q3.3 5 4.5 5 H5.5 Q6.7 5 7 6.5 L7.6 13 Z" fill="#30e040" stroke="#404040" stroke-width="0.6"/>
<path d="M6.8 13 L10.2 1.500 L16 13 Z" fill="#30c8c8" stroke="#404040" stroke-width="0.7"/>
<path d="M0.5 13.3 H17" stroke="#e02020" stroke-width="1.2"/>
</svg>
<!-- sigma bars -->
<svg class="abs" style="left:247px;top:54px" width="18" height="16" viewBox="0 0 18 16" shape-rendering="crispEdges">
<path d="M1.5 2 V13.5 H17" fill="none" stroke="#505050" stroke-width="1"/>
<path d="M4.5 13 V6 M6.5 13 V8 M8.5 13 V10 M10.5 13 V11 M12.5 13 V11" stroke="#e02020" stroke-width="1"/>
<path d="M16 3 V1.5 H10.5 L13.5 4.8 L10.5 8.5 H16 V7" fill="none" stroke="#303030" stroke-width="1" shape-rendering="auto"/>
</svg>
<!-- globe -->
<svg class="abs" style="left:277px;top:53px" width="18" height="18" viewBox="0 0 18 18">
<defs><radialGradient id="gl" cx="0.4" cy="0.35" r="0.75"><stop offset="0" stop-color="#7ab0f8"/><stop offset="0.6" stop-color="#4a80e0"/><stop offset="1" stop-color="#2c58b8"/></radialGradient></defs>
<circle cx="9" cy="8.800" r="7.700" fill="url(#gl)" stroke="#485060" stroke-width="0.9"/>
<path d="M4.300 4.300 L6.500 3 L9.300 3.600 L8.300 5.200 L6.800 5.600 L5.600 6.800 L4.400 6 Z" fill="#48d040"/>
<path d="M7 6.800 L9.500 5.800 L11 7 L13.600 7.400 L14.300 9.400 L12.600 10.800 L12 13 L10.300 15 L9.300 14.600 L9.600 12 L8 10.600 L6.600 8.600 Z" fill="#48d040"/>
</svg>
<!-- A -->
<div class="abs" style="left:301px;top:51.600px;width:17px;text-align:center;font-family:'Liberation Serif',serif;font-size:17.500px;line-height:20px;color:#3838b0;transform:scaleX(1.08);-webkit-text-stroke:0.2px #3838b0">A</div>
<!-- windows -->
<svg class="abs" style="left:325px;top:53.500px" width="18" height="17" viewBox="0 0 18 17" shape-rendering="crispEdges">
<rect x="6.500" y="1.500" width="9" height="4" fill="#fff" stroke="#309898"/><rect x="6" y="0" width="10" height="3" fill="#309898"/><rect x="7" y="1" width="3" height="1" fill="#c8f0f0"/>
<rect x="1.500" y="5.500" width="9" height="5" fill="#fff" stroke="#309898"/><rect x="1" y="4" width="10" height="3" fill="#309898"/><rect x="2" y="5" width="3" height="1" fill="#c8f0f0"/>
<rect x="7.500" y="9.500" width="9" height="5" fill="#fff" stroke="#3838a0"/><rect x="7" y="8" width="10" height="3" fill="#3838a0"/>
</svg>
<!-- process -->
<svg class="abs" style="left:349px;top:54px" width="19" height="16" viewBox="0 0 19 16" shape-rendering="crispEdges">
<rect x="1.500" y="5.500" width="5" height="3" fill="#fff" stroke="#404040"/><rect x="1.500" y="8.500" width="5" height="3" fill="#fff" stroke="#404040"/><rect x="1.500" y="11.500" width="5" height="3" fill="#fff" stroke="#404040"/>
<rect x="5.500" y="2.500" width="5" height="3" fill="#80e0f0" stroke="#404040"/>
<path d="M11 4 H14.500" stroke="#404040" stroke-width="1"/><path d="M13.500 1.600 L16.300 4 L13.500 6.400 Z" fill="#404040" shape-rendering="auto"/>
<rect x="12.500" y="10.500" width="5" height="3" fill="#f0e040" stroke="#606040"/>
<path d="M12 11 L8.500 7.500 M8.500 7.500 H11 M8.500 7.500 V10" stroke="#404040" stroke-width="1" fill="none" shape-rendering="auto"/>
</svg>
<!-- stopwatch -->
<svg class="abs" style="left:374px;top:53px" width="16" height="17" viewBox="0 0 16 17">
<circle cx="8" cy="9.700" r="5.900" fill="#f8f8f8" stroke="#505050" stroke-width="1.200"/>
<rect x="6.200" y="1" width="3.600" height="1.100" fill="#505050"/><rect x="7.500" y="2" width="1" height="1.800" fill="#505050"/>
<circle cx="2.900" cy="4.600" r="1.100" fill="#e8e8e8" stroke="#505050" stroke-width="0.8"/><circle cx="13.100" cy="4.600" r="1.100" fill="#e8e8e8" stroke="#505050" stroke-width="0.8"/>
<path d="M8 9.700 L10.900 6.400" stroke="#505050" stroke-width="1"/>
<circle cx="8" cy="5.700" r="0.550" fill="#4040c0"/><circle cx="8" cy="13.700" r="0.550" fill="#4040c0"/><circle cx="4" cy="9.700" r="0.550" fill="#4040c0"/><circle cx="12" cy="9.700" r="0.550" fill="#4040c0"/>
</svg>
<!-- zoom icons -->
<svg class="abs" style="left:402px;top:54px" width="19" height="16" viewBox="0 0 19 16">
<circle cx="6.300" cy="6.900" r="4.600" fill="#efede2" stroke="#505050" stroke-width="1.300"/><path d="M9.900 10.600 L14.200 15.200" stroke="#404040" stroke-width="2.100"/>
<path d="M13.200 4.500 H17.800 M15.500 2.200 V6.800" stroke="#404040" stroke-width="1.100"/>
</svg>
<svg class="abs" style="left:426px;top:54px" width="19" height="16" viewBox="0 0 19 16">
<circle cx="6.300" cy="6.900" r="4.600" fill="#efede2" stroke="#505050" stroke-width="1.300"/><path d="M9.900 10.600 L14.200 15.200" stroke="#404040" stroke-width="2.100"/>
<path d="M13.200 4.300 H17.800" stroke="#404040" stroke-width="1.100"/>
</svg>
<svg class="abs" style="left:450px;top:54px" width="19" height="16" viewBox="0 0 19 16">
<circle cx="6.300" cy="6.900" r="4.600" fill="#efede2" stroke="#505050" stroke-width="1.300"/><path d="M9.900 10.600 L14.200 15.200" stroke="#404040" stroke-width="2.100"/>
<path d="M13.500 1.500 L17.800 6.200 M17.800 1.500 L13.500 6.200" stroke="#e02030" stroke-width="1.400"/>
</svg>
<!-- TIC -->
<div class="abs" style="left:481.800px;top:56.500px;font-family:'Liberation Mono',monospace;font-size:9px;line-height:14px;color:#383838;letter-spacing:0px;transform:scaleY(1.18);-webkit-text-stroke:0.15px #383838">TIC</div>
<!-- arrows -->
<svg class="abs" style="left:507.500px;top:56.700px" width="11.700" height="11.700" viewBox="0 0 13 13">
<path d="M1 6.500 L6.500 1 V4 H11.500 V9 H6.500 V12 Z" fill="#60a0a8" stroke="#305058" stroke-width="0.900"/>
</svg>
<svg class="abs" style="left:533.300px;top:56.700px" width="11.700" height="11.700" viewBox="0 0 13 13">
<path d="M12 6.500 L6.500 1 V4 H1.500 V9 H6.500 V12 Z" fill="#60a0a8" stroke="#305058" stroke-width="0.900"/>
</svg>
<!-- expand -->
<svg class="abs" style="left:555px;top:55px" width="14" height="15" viewBox="0 0 14 15">
<path d="M0.500 0.800 H5.500 L0.500 5.800 Z M13.500 0.800 H8.500 L13.500 5.800 Z M0.500 14.200 H5.500 L0.500 9.200 Z M13.500 14.200 H8.500 L13.500 9.200 Z" fill="#404040"/>
<path d="M2 2.300 L12 12.700 M12 2.300 L2 12.700" stroke="#404040" stroke-width="0.9"/>
</svg>

</div></body></html>
